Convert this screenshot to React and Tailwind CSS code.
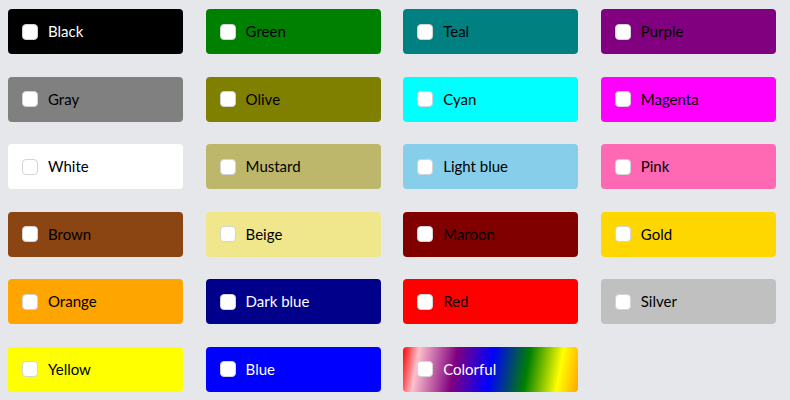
import { useState } from "react";

const colors = [
    { name: "Black", bg: "bg-[#000000]", text: "text-white" },
    { name: "Green", bg: "bg-[#008000]", text: "text-black" },
    { name: "Teal", bg: "bg-[#008080]", text: "text-black" },
    { name: "Purple", bg: "bg-[#800080]", text: "text-black" },
    { name: "Gray", bg: "bg-[#808080]", text: "text-black" },
    { name: "Olive", bg: "bg-[#808000]", text: "text-black" },
    { name: "Cyan", bg: "bg-[#00ffff]", text: "text-black" },
    { name: "Magenta", bg: "bg-[#ff00ff]", text: "text-black" },
    { name: "White", bg: "bg-[#ffffff]", text: "text-black" },
    { name: "Mustard", bg: "bg-[#bdb76b]", text: "text-black" },
    { name: "Light blue", bg: "bg-[#87ceeb]", text: "text-black" },
    { name: "Pink", bg: "bg-[#ff69b4]", text: "text-black" },
    { name: "Brown", bg: "bg-[#8b4513]", text: "text-black" },
    { name: "Beige", bg: "bg-[#f0e68c]", text: "text-black" },
    { name: "Maroon", bg: "bg-[#800000]", text: "text-black" },
    { name: "Gold", bg: "bg-[#ffd700]", text: "text-black" },
    { name: "Orange", bg: "bg-[#ffa500]", text: "text-black" },
    { name: "Dark blue", bg: "bg-[#00008b]", text: "text-white" },
    { name: "Red", bg: "bg-[#ff0000]", text: "text-black" },
    { name: "Silver", bg: "bg-[#c0c0c0]", text: "text-black" },
    { name: "Yellow", bg: "bg-[#ffff00]", text: "text-black" },
    { name: "Blue", bg: "bg-[#0000ff]", text: "text-white" },
    {
        name: "Colorful",
        bg: "bg-[linear-gradient(100deg,#ff0000_0%,#ffc0cb_9%,#800080_30%,#0000ff_50%,#008000_70%,#ffff00_88%,#ffa500_100%)]",
        text: "text-white",
    },
];

const ColorOption = ({ color }) => {
    const [checked, setChecked] = useState(false);
    return (
        <label className={`flex items-center h-[45px] rounded-[4px] pl-[14px] gap-[10px] cursor-pointer ${color.bg} ${color.text}`}>
            <span
                className="w-[16px] h-[16px] rounded-[4px] bg-white border border-[#d4d4d8] shrink-0"
                onClick={() => setChecked(!checked)}
            ></span>
            <span className="text-[15px] leading-none">{color.name}</span>
        </label>
    );
};

export default function App() {
    return (
        <div className="w-[790px] h-[400px] bg-[#e5e7eb] pl-[8px] pt-[9px]" style={{ fontFamily: "Lato, sans-serif" }}>
            <div className="grid grid-cols-[repeat(4,175px)] gap-x-[22.6px] gap-y-[22.6px]">
                {colors.map((c) => (
                    <ColorOption key={c.name} color={c} />
                ))}
            </div>
        </div>
    );
}
